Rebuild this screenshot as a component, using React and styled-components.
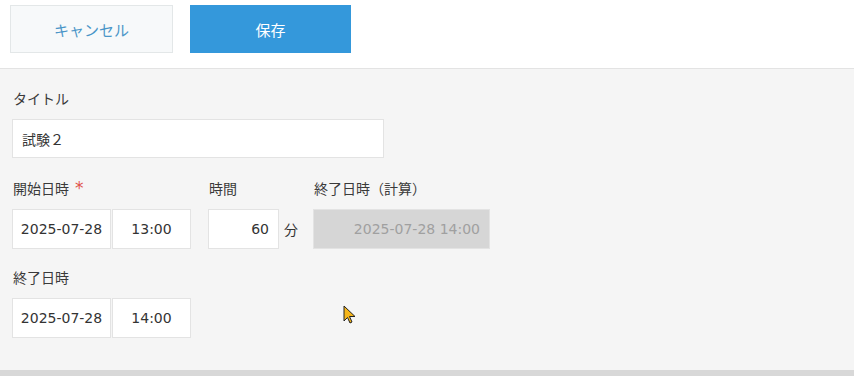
import React from 'react'
import styled, { createGlobalStyle } from 'styled-components'

const GlobalStyle = createGlobalStyle`
  html, body {
    margin: 0;
    padding: 0;
    background: #fff;
  }
  body {
    font-family: "DejaVu Sans", "Noto Sans CJK JP", sans-serif;
    color: #333;
    font-size: 14px;
  }
`

const Page = styled.div`
  position: relative;
  height: 376px;
  display: flex;
  flex-direction: column;
  overflow: hidden;
`

const Toolbar = styled.div`
  height: 69px;
  display: flex;
  gap: 17px;
  padding: 5px 10px 0;
  box-sizing: border-box;
  border-bottom: 1px solid #e3e3e3;
`

const Button = styled.button`
  width: ${p => p.$w}px;
  height: 48px;
  box-sizing: border-box;
  font-family: "Noto Sans CJK JP", sans-serif;
  font-size: 15px;
  cursor: pointer;
  border: 1px solid ${p => (p.$primary ? '#3498db' : '#e3e7e8')};
  background: ${p => (p.$primary ? '#3498db' : '#f7f9fa')};
  color: ${p => (p.$primary ? '#fff' : '#4b96c8')};
`

const Panel = styled.div`
  flex: 1;
  background: #f5f5f5;
  padding: 19px 12px 0;
  box-sizing: border-box;
  border-bottom: 6px solid #d8d8d8;
`

const Field = styled.div`
  display: flex;
  flex-direction: column;
  margin-bottom: ${p => p.$mb || 0}px;
  margin-right: ${p => p.$mr || 0}px;
`

const Label = styled.div`
  font-family: "Noto Sans CJK JP", sans-serif;
  font-size: 14px;
  line-height: 20px;
  height: 20px;
  margin-bottom: 11px;
  color: #3a3a3a;
  padding-left: 1px;
`

const Required = styled.span`
  font-family: "DejaVu Sans", sans-serif;
  color: #e0524a;
  font-size: 17px;
  line-height: 20px;
  margin-left: 6px;
`

const Row = styled.div`
  display: flex;
  gap: 15px;
  margin-bottom: 18px;
`

const Inputs = styled.div`
  display: flex;
  align-items: center;
  gap: ${p => p.$gap ?? 1}px;
`

const Input = styled.div`
  width: ${p => p.$w}px;
  height: ${p => p.$h || 40}px;
  box-sizing: border-box;
  border: 1px solid #e3e3e3;
  background: ${p => (p.$disabled ? '#d6d6d6' : '#fff')};
  color: ${p => (p.$disabled ? '#a0a0a0' : '#333')};
  font-size: 14px;
  display: flex;
  align-items: center;
  justify-content: ${p => p.$align || 'flex-start'};
  padding: 0 9px;
  white-space: nowrap;
`

const Unit = styled.span`
  font-family: "Noto Sans CJK JP", sans-serif;
  margin-left: 5px;
`

const Cursor = styled.svg`
  position: absolute;
  left: 343px;
  top: 305px;
`

export default function App() {
  return (
    <Page>
      <GlobalStyle />
      <Toolbar>
        <Button $w={163}>キャンセル</Button>
        <Button $w={161} $primary>保存</Button>
      </Toolbar>
      <Panel>
        <Field $mb={20}>
          <Label>タイトル</Label>
          <Input $w={372} $h={39}>試験２</Input>
        </Field>
        <Row>
          <Field $mr={2}>
            <Label>開始日時<Required>*</Required></Label>
            <Inputs>
              <Input $w={99} $align="center">2025-07-28</Input>
              <Input $w={79} $align="center">13:00</Input>
            </Inputs>
          </Field>
          <Field>
            <Label>時間</Label>
            <Inputs $gap={0}>
              <Input $w={71} $align="flex-end">60</Input>
              <Unit>分</Unit>
            </Inputs>
          </Field>
          <Field>
            <Label>終了日時（計算）</Label>
            <Input $w={177} $align="flex-end" $disabled>2025-07-28 14:00</Input>
          </Field>
        </Row>
        <Field>
          <Label>終了日時</Label>
          <Inputs>
            <Input $w={99} $align="center">2025-07-28</Input>
            <Input $w={79} $align="center">14:00</Input>
          </Inputs>
        </Field>
      </Panel>
      <Cursor width="14" height="20" viewBox="0 0 14 20">
        <path d="M1 1 L1 16 L4.5 12.5 L7 18 L9 17 L6.5 11.5 L12 11.5 Z" fill="#f5b518" stroke="#222" strokeWidth="1" strokeLinejoin="round" />
      </Cursor>
    </Page>
  )
}
